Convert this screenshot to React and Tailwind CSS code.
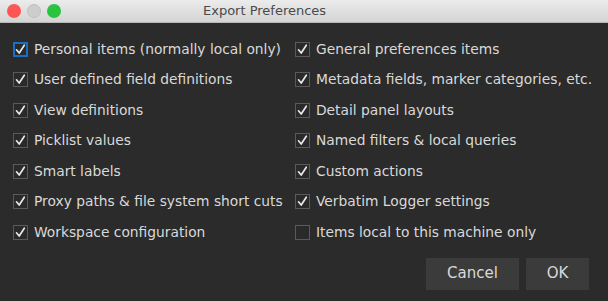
import React from "react";

const LEFT = [
  ["Personal items (normally local only)", true],
  ["User defined field definitions", true],
  ["View definitions", true],
  ["Picklist values", true],
  ["Smart labels", true],
  ["Proxy paths & file system short cuts", true],
  ["Workspace configuration", true],
];

const RIGHT = [
  ["General preferences items", true],
  ["Metadata fields, marker categories, etc.", true],
  ["Detail panel layouts", true],
  ["Named filters & local queries", true],
  ["Custom actions", true],
  ["Verbatim Logger settings", true],
  ["Items local to this machine only", false],
];

function Check({ checked, focused }) {
  return (
    <span
      className={`shrink-0 w-[15px] h-[15px] flex items-center justify-center bg-[#2a2a2a] ${
        focused ? "border-2 border-[#1a6fc4]" : "border border-[#5a5a5a]"
      }`}
    >
      {checked && (
        <svg viewBox="0 0 15 15" className="w-[15px] h-[15px] shrink-0" fill="none">
          <path
            d="M3.5 7.8 L6.2 11 L11.3 3.2"
            stroke="#e8e8e8"
            strokeWidth="1.7"
            strokeLinecap="round"
            strokeLinejoin="round"
          />
        </svg>
      )}
    </span>
  );
}

function Row({ label, checked, focused }) {
  return (
    <div className="h-[30.5px] flex items-center gap-[6px]">
      <Check checked={checked} focused={focused} />
      <span className="text-[13.8px] text-[#d9d9d9] whitespace-nowrap">{label}</span>
    </div>
  );
}

export default function App() {
  return (
    <div
      className="w-[608px] h-[301px] bg-[#2b2b2b] flex flex-col overflow-hidden"
      style={{ fontFamily: '"DejaVu Sans", "Noto Sans", sans-serif' }}
    >
      <div className="h-[23px] shrink-0 flex items-center bg-gradient-to-b from-[#ececec] to-[#d4d4d4] border-b border-[#b8b8b8]">
        <div className="flex items-center gap-[6px] pl-[7px]">
          <span className="w-[14px] h-[14px] rounded-full bg-[#fc5753]" />
          <span className="w-[14px] h-[14px] rounded-full bg-[#cdcdcd] border border-[#c0c0c0]" />
          <span className="w-[14px] h-[14px] rounded-full bg-[#29c33f]" />
        </div>
        <div className="ml-[142px] text-[13px] text-[#4a4a4a]">Export Preferences</div>
      </div>

      <div className="flex pt-[11px] pl-[13px]">
        <div className="w-[282px]">
          {LEFT.map(([label, checked], i) => (
            <Row key={label} label={label} checked={checked} focused={i === 0} />
          ))}
        </div>
        <div>
          {RIGHT.map(([label, checked]) => (
            <Row key={label} label={label} checked={checked} />
          ))}
        </div>
      </div>

      <div className="flex justify-end gap-[7px] pr-[19px] mt-[10px]">
        <button className="w-[93px] h-[32px] bg-[#3b3b3b] text-[15px] text-[#d9d9d9]">
          Cancel
        </button>
        <button className="w-[63px] h-[32px] bg-[#3b3b3b] text-[15px] text-[#d9d9d9]">
          OK
        </button>
      </div>
    </div>
  );
}
